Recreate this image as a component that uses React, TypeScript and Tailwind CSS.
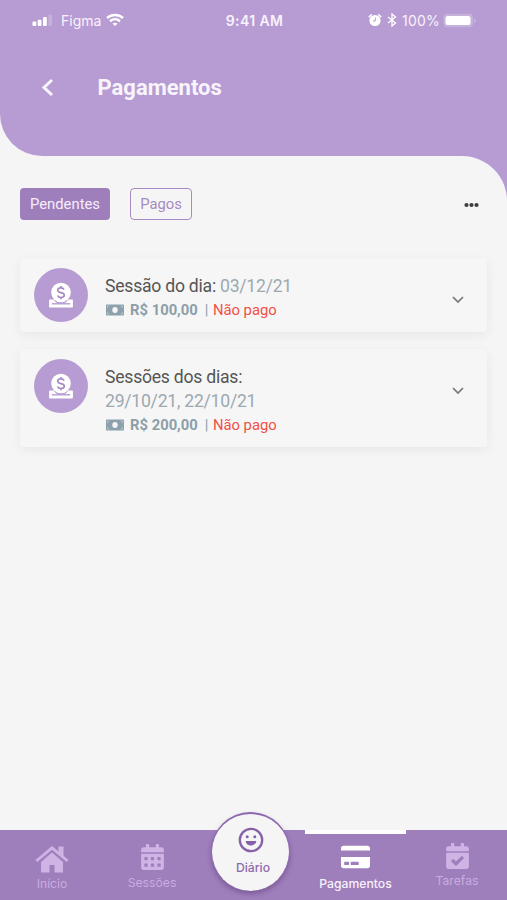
import { FaCalendarAlt, FaCalendarCheck, FaCreditCard } from 'react-icons/fa';

interface Payment {
  title: string;
  inlineDate?: string;
  dates?: string;
  amount: string;
}

const PAYMENTS: Payment[] = [
  { title: 'Sessão do dia:', inlineDate: '03/12/21', amount: 'R$ 100,00' },
  { title: 'Sessões dos dias:', dates: '29/10/21, 22/10/21', amount: 'R$ 200,00' },
];

export default function App() {
  return (
    <div className="flex h-[900px] w-[507px] flex-col overflow-hidden bg-[#f5f5f5] font-['Roboto',sans-serif]">
      <header className="h-[156px] shrink-0 rounded-bl-[42px] bg-[#b79cd3]">
        <StatusBar />
        <div className="flex h-[95px] items-center pl-[40px]">
          <svg width="14" height="20" viewBox="0 0 14 20" fill="none" stroke="#f8f4fb" strokeWidth="3">
            <path d="M12 2 4 9.5 12 17" />
          </svg>
          <h1 className="mt-px ml-[43.5px] text-[22px] leading-6 font-bold text-[#f8f4fb]">Pagamentos</h1>
        </div>
      </header>

      {/* the purple strip shows behind the rounded top right corner */}
      <div className="flex flex-1 bg-linear-to-r from-[#f5f5f5] from-50% to-[#b79cd3] to-50%">
        <main className="flex-1 rounded-tr-[45px] bg-[#f5f5f5] px-5 pt-8">
          <div className="flex h-8 items-center">
            <button className="h-8 w-[90px] rounded-[4px] bg-[#9f7ebc] text-[14.8px] text-[#f5eefa]">Pendentes</button>
            <button className="ml-5 h-8 w-[62px] rounded-[4px] border-[1.5px] border-[#a78ac4] text-[14.8px] text-[#a78ac4]">
              Pagos
            </button>
            <svg className="mt-[2px] mr-2 ml-auto" width="15" height="6" viewBox="0 0 15 6" fill="#3e3e3e">
              <circle cx="2.5" cy="3" r="2.1" />
              <circle cx="7.5" cy="3" r="2.1" />
              <circle cx="12.5" cy="3" r="2.1" />
            </svg>
          </div>
          <div className="mt-[38px] flex flex-col gap-[17px]">
            {PAYMENTS.map((payment) => (
              <PaymentCard key={payment.title} payment={payment} />
            ))}
          </div>
        </main>
      </div>

      <BottomNav />
    </div>
  );
}

function StatusBar() {
  return (
    <div className="flex h-10 items-center font-['Inter',sans-serif] text-[14px] text-[#f7f2fb]">
      <div className="flex w-[200px] items-center pl-8">
        <svg width="21" height="14" viewBox="0 0 21 14" fill="white">
          <rect x="0.5" y="8.5" width="3.8" height="4.5" rx="1" />
          <rect x="5.7" y="6.7" width="3.8" height="6.3" rx="1" />
          <rect x="11" y="4" width="3.8" height="9" rx="1" />
          <rect x="16.3" y="1.5" width="3.8" height="11.5" rx="1" opacity="0.2" />
        </svg>
        <span className="ml-2">Figma</span>
        <svg className="ml-[5px]" width="18" height="14" viewBox="0 0 18 14" fill="none" stroke="white" strokeWidth="2.5">
          <path d="M1 5C5.5.9 12.5.9 17 5" />
          <path d="M4 8.2c2.9-2.5 7.1-2.5 10 0" />
          <path d="m6.5 10.6 2.5 2.5 2.5-2.5c-1.5-1.2-3.5-1.2-5 0Z" fill="white" stroke="none" />
        </svg>
      </div>
      <div className="flex-1 pl-[2px] text-center font-semibold tracking-[0.4px]">9:41 AM</div>
      <div className="flex w-[200px] items-center justify-end pr-[30px]">
        <svg width="14" height="14" viewBox="0 0 14 14" fill="none">
          <circle cx="7" cy="7.5" r="5.6" fill="white" />
          <path d="M1.2 3.6 3.4 1.7M12.8 3.6 10.6 1.7" stroke="white" strokeWidth="1.5" strokeLinecap="round" />
          <path d="M7.3 4.5V8H5" stroke="#b79cd3" />
        </svg>
        <svg className="ml-[5px]" width="10" height="14" viewBox="0 0 10 14" fill="none" stroke="white" strokeWidth="1.3">
          <path d="m1 4 7.5 6L5 13V1l3.5 3L1 10" />
        </svg>
        <span className="ml-[5px] tracking-[0.2px]">100%</span>
        <svg className="ml-[3px]" width="34" height="15" viewBox="0 0 34 15" fill="white">
          <rect x="0.5" y="0.8" width="29.5" height="13.4" rx="4" opacity="0.22" />
          <rect x="2.5" y="3" width="25" height="9" rx="2" />
          <path d="M31 5.2c2.2 1 2.2 3.6 0 4.6Z" opacity="0.3" />
        </svg>
      </div>
    </div>
  );
}

function PaymentCard({ payment }: { payment: Payment }) {
  return (
    <article className="flex rounded-[4px] bg-[#f6f6f6] py-[10px] pr-[22px] pl-[14px] shadow-[0_3px_12px_rgba(0,0,0,0.06)]">
      <div className="flex size-[54px] shrink-0 items-center justify-center rounded-full bg-[#b79cd3]">
        <CoinSlotIcon />
      </div>
      <div className="ml-[17px] flex-1 pt-[6px] text-[17.6px] leading-6 tracking-[-0.24px] text-[#555]">
        <p>
          {payment.title} {payment.inlineDate && <span className="text-[#9ca9b0]">{payment.inlineDate}</span>}
        </p>
        {payment.dates && <p className="text-[#9ca9b0]">{payment.dates}</p>}
        <div className="flex items-center text-[14.8px] tracking-normal text-[#8c9fa9]">
          <BanknoteIcon />
          <span className="ml-[6px] font-bold">{payment.amount}</span>
          <span className="ml-[7px]">|</span>
          <span className="ml-[4.5px] text-[#f15046]">Não pago</span>
        </div>
      </div>
      <svg className="mt-[27px]" width="14" height="10" viewBox="0 0 14 10" fill="none" stroke="#777" strokeWidth="1.7">
        <path d="m2 2 5 5 5-5" />
      </svg>
    </article>
  );
}

function CoinSlotIcon() {
  return (
    <svg width="26" height="26" viewBox="0 0 26 26" fill="white">
      <path
        d="M1.8 18.3h3.7c1.8 3 4 4.2 7.5 4.2s5.7-1.2 7.5-4.2h3.7v6.5H1.8Z"
        stroke="white"
        strokeWidth="1.4"
        strokeLinejoin="round"
      />
      <path d="M3.8 21.8h18.4" fill="none" stroke="#b79cd3" strokeWidth="1.4" />
      <circle cx="13" cy="10.5" r="9.8" />
      <path
        d="M16 7.6C15.5 6.4 14.5 5.9 13 5.9c-2 0-3.2.9-3.2 2.3 0 3.4 6.5 1.3 6.5 4.9 0 1.5-1.3 2.4-3.3 2.4-1.7 0-2.9-.7-3.4-2M13 4v2M13 15.3v2"
        fill="none"
        stroke="#a78ac4"
        strokeWidth="1.7"
      />
    </svg>
  );
}

function BanknoteIcon() {
  return (
    <svg className="ml-[1px]" width="18" height="12" viewBox="0 0 18 12">
      <rect x="0" y="0.5" width="18" height="11" rx="0.8" fill="#8ca1ac" />
      <path d="M1.5 4V2h2M14.5 2h2v2M1.5 8v2h2M14.5 10h2V8" fill="none" stroke="#b3c1c9" strokeWidth="1" />
      <ellipse cx="9" cy="6" rx="2.7" ry="2.9" fill="#f5f5f5" />
    </svg>
  );
}

function BottomNav() {
  return (
    <nav className="relative flex h-[70px] shrink-0 bg-[#9f7ebc] font-['Inter',sans-serif] text-[12.2px] leading-[15px] text-[#c9acdf]">
      <div className="flex w-[104px] flex-col items-center pt-[15px]">
        <svg width="34" height="28" viewBox="0 0 34 28" fill="#d0b3e5">
          <path d="M23.5 1.5h5v11l-5-4Z" />
          <path d="M17 7.5 6 17v10.500h8.500V20h5v7.500H28V17Z" />
          <path d="m1.3 16 15.700-13 15.700 13" fill="none" stroke="#d0b3e5" strokeWidth="2.9" />
        </svg>
        <span className="mt-[3px]">Início</span>
      </div>
      <div className="flex w-[96px] flex-col items-center pt-[14px]">
        <FaCalendarAlt className="h-[26px] w-[23px] text-[#d0b3e5]" />
        <span className="mt-[5px]">Sessões</span>
      </div>
      <div className="w-[105px]" />
      <div className="flex w-[101px] flex-col items-center border-t-4 border-white pt-[10px] font-medium text-[#f7f1fa]">
        <FaCreditCard className="h-[26px] w-[29px] text-white" />
        <span className="mt-[6px]">Pagamentos</span>
      </div>
      <div className="flex w-[101px] flex-col items-center pl-px pt-[13px]">
        <FaCalendarCheck className="h-[26px] w-[23px] text-[#d0b3e5]" />
        <span className="mt-[4px]">Tarefas</span>
      </div>

      {/* raised button over the top edge of the bar */}
      <div className="absolute top-[-18px] left-[211px] flex size-[79px] flex-col items-center rounded-full border-x border-t-2 border-[#8e67b0] bg-[#f5f5f5] pt-[13px] text-[#8f69ae] shadow-[0_3px_5px_rgba(60,30,90,0.35)]">
        <svg className="ml-px" width="26" height="26" viewBox="0 0 26 26" fill="#8660a9">
          <circle cx="13" cy="13" r="11.2" fill="none" stroke="#8660a9" strokeWidth="2.3" />
          <circle cx="9.2" cy="9.7" r="1.5" />
          <circle cx="16.8" cy="9.7" r="1.5" />
          <path d="M7.8 14h10.4c0 6-10.4 6-10.4 0Z" />
        </svg>
        <span className="mt-[7px] ml-[5px] font-medium">Diário</span>
      </div>
    </nav>
  );
}
